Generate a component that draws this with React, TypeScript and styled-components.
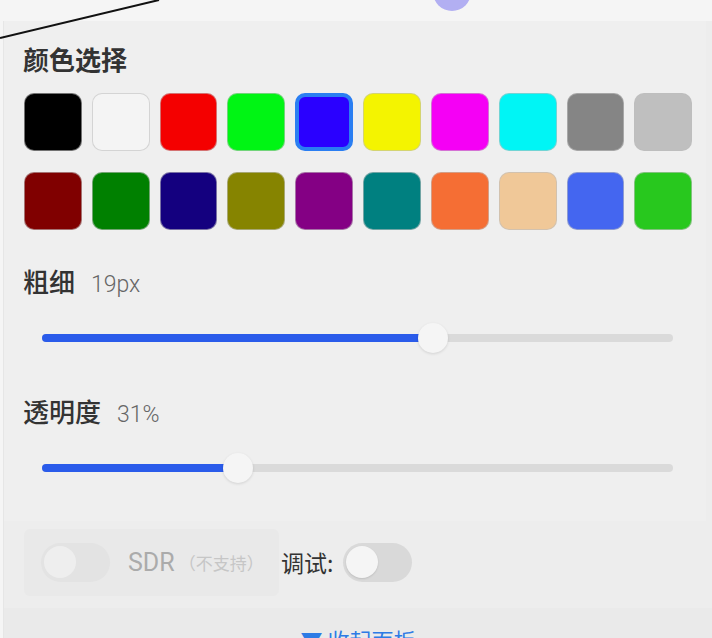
import styled, { createGlobalStyle } from "styled-components";

const GlobalStyle = createGlobalStyle`
  html, body {
    margin: 0;
    padding: 0;
    background: #f5f5f5;
  }
  * {
    box-sizing: border-box;
  }
`;

const swatches = [
  "#000000",
  "#f4f4f4",
  "#f40000",
  "#00f514",
  "#2a00ff",
  "#f4f400",
  "#f500f5",
  "#00f5f5",
  "#858585",
  "#bfbfbf",
  "#800000",
  "#008000",
  "#14007f",
  "#868400",
  "#840084",
  "#008080",
  "#f56e34",
  "#f0c898",
  "#4466f0",
  "#28c81e",
];

const SELECTED = 4;

interface SliderRowProps {
  label: string;
  value: string;
  percent: number;
}

const SliderRow: React.FC<SliderRowProps> = ({ label, value, percent }) => (
  <SliderBlock>
    <LabelRow>
      <Label>{label}</Label>
      <Value>{value}</Value>
    </LabelRow>
    <SliderWrap>
      <Track>
        <Fill style={{ width: `${percent}%` }} />
        <Thumb style={{ left: `${percent}%` }} />
      </Track>
    </SliderWrap>
  </SliderBlock>
);

const App: React.FC = () => {
  return (
    <>
      <GlobalStyle />
      <Screen>
        <CanvasStrip />
        <Panel>
          <Section>
            <Title>颜色选择</Title>
            <SwatchGrid>
              {swatches.map((c, i) => (
                <Swatch key={i} $color={c} $selected={i === SELECTED} />
              ))}
            </SwatchGrid>
            <SliderRow label="粗细" value="19px" percent={62} />
            <SliderRow label="透明度" value="31%" percent={31} />
          </Section>

          <ToggleRow>
            <DisabledGroup>
              <Switch $disabled />
              <SdrText>SDR</SdrText>
              <Unsupported>（不支持）</Unsupported>
            </DisabledGroup>
            <DebugLabel>调试:</DebugLabel>
            <Switch />
          </ToggleRow>

          <Footer>
            <CollapseButton>▼ 收起面板</CollapseButton>
          </Footer>
        </Panel>

        <Drawing viewBox="0 0 712 638">
          <line x1="0" y1="38" x2="159" y2="0" stroke="#111" strokeWidth="2" />
          <circle cx="452" cy="-8" r="19" fill="#b2aff2" />
        </Drawing>
      </Screen>
    </>
  );
};

export default App;

const Screen = styled.div`
  position: relative;
  width: 712px;
  height: 638px;
  overflow: hidden;
  background: #f5f5f5;
  display: flex;
  flex-direction: column;
  font-family: Roboto, "Noto Sans CJK SC", sans-serif;
`;

const CanvasStrip = styled.div`
  height: 21px;
  flex-shrink: 0;
`;

const Drawing = styled.svg`
  position: absolute;
  top: 0;
  left: 0;
  width: 712px;
  height: 638px;
  pointer-events: none;
  overflow: visible;
`;

const Panel = styled.div`
  flex: 1;
  margin-left: 3px;
  background: #ededed;
  border-left: 1px solid #e6e6e6;
  display: flex;
  flex-direction: column;
`;

const Section = styled.div`
  margin-right: 6px;
  background: #efefef;
  padding: 21px 14px 38px 19px;
`;

const Title = styled.div`
  font-family: "Noto Sans CJK SC", sans-serif;
  font-size: 26px;
  font-weight: 700;
  line-height: 34px;
  color: #333;
`;

const SwatchGrid = styled.div`
  margin-top: 17px;
  display: grid;
  grid-template-columns: repeat(10, 1fr);
  column-gap: 10px;
  row-gap: 21px;
  padding-left: 1px;
`;

const Swatch = styled.div<{ $color: string; $selected?: boolean }>`
  aspect-ratio: 1;
  border-radius: 10px;
  background: ${({ $color }) => $color};
  border: ${({ $selected }) =>
    $selected ? "4px solid #2a7ef2" : "1.5px solid rgba(190, 190, 190, 0.6)"};
`;

const SliderBlock = styled.div`
  margin-top: 34px;

  & + & {
    margin-top: 41px;
  }
`;

const LabelRow = styled.div`
  display: flex;
  align-items: baseline;
  gap: 16px;
  line-height: 34px;
`;

const Label = styled.span`
  font-family: "Noto Sans CJK SC", sans-serif;
  font-size: 26px;
  font-weight: 500;
  color: #333;
`;

const Value = styled.span`
  font-family: Roboto, sans-serif;
  font-size: 23px;
  font-weight: 300;
  color: #666;
`;

const SliderWrap = styled.div`
  margin-top: 21px;
  height: 30px;
  padding: 0 19px 0 19px;
  display: flex;
  align-items: center;
`;

const Track = styled.div`
  position: relative;
  flex: 1;
  height: 8px;
  border-radius: 4px;
  background: #dadada;
`;

const Fill = styled.div`
  height: 100%;
  border-radius: 4px;
  background: #2a5bea;
`;

const Thumb = styled.div`
  position: absolute;
  top: 50%;
  width: 30px;
  height: 30px;
  border-radius: 50%;
  background: #f5f5f5;
  box-shadow: 0 1px 3px rgba(0, 0, 0, 0.12);
  transform: translate(-50%, -50%);
`;

const ToggleRow = styled.div`
  height: 87px;
  padding: 0 0 4px 20px;
  display: flex;
  align-items: center;
`;

const DisabledGroup = styled.div`
  display: flex;
  align-items: center;
  height: 67px;
  width: 255px;
  padding-left: 17px;
  border-radius: 6px;
  background: #e9e9e9;
`;

const Switch = styled.div<{ $disabled?: boolean }>`
  position: relative;
  width: 69px;
  height: 39px;
  border-radius: 20px;
  flex-shrink: 0;
  background: ${({ $disabled }) => ($disabled ? "#e3e3e3" : "#d9d9d9")};

  &::after {
    content: "";
    position: absolute;
    top: 3.5px;
    left: 3px;
    width: 32px;
    height: 32px;
    border-radius: 50%;
    background: ${({ $disabled }) => ($disabled ? "#eeeeee" : "#f5f5f5")};
    box-shadow: ${({ $disabled }) =>
      $disabled ? "none" : "0 1px 2px rgba(0, 0, 0, 0.12)"};
  }
`;

const SdrText = styled.span`
  margin-left: 18px;
  font-family: Roboto, sans-serif;
  font-size: 25px;
  color: #ababab;
`;

const Unsupported = styled.span`
  margin-left: 4px;
  font-family: "Noto Sans CJK SC", sans-serif;
  font-size: 17px;
  color: #c6c6c6;
`;

const DebugLabel = styled.span`
  margin: 0 10px 0 2px;
  font-family: "Noto Sans CJK SC", sans-serif;
  font-size: 23px;
  color: #333;
`;

const Footer = styled.div`
  flex: 1;
  background: #eaeaea;
  display: flex;
  justify-content: center;
  padding-top: 16px;
`;

const CollapseButton = styled.span`
  font-family: "Noto Sans CJK SC", sans-serif;
  font-size: 22px;
  line-height: 30px;
  color: #2d7be5;
`;
